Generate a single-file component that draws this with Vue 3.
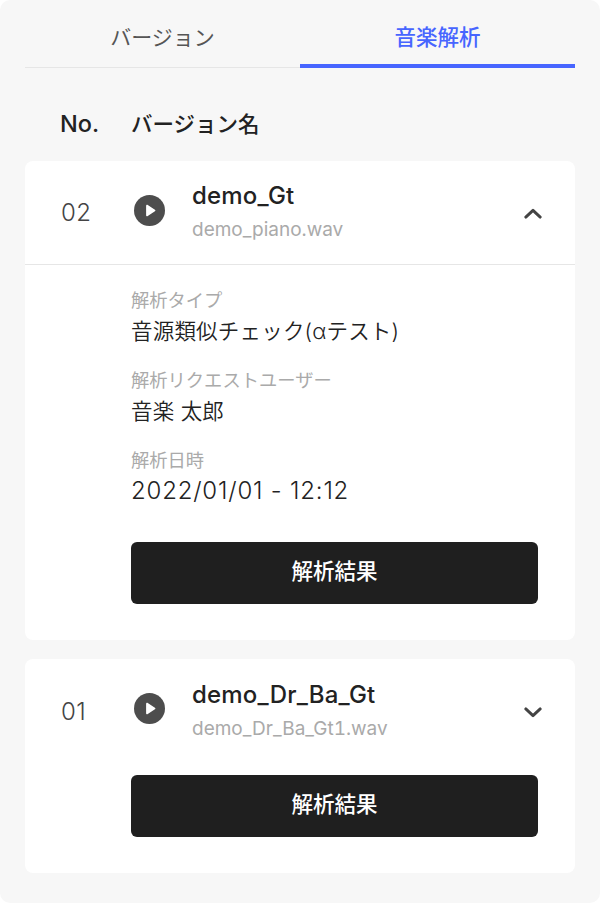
<template>
  <div class="screen">
    <div class="tabs">
      <div class="tab">バージョン</div>
      <div class="tab active">音楽解析</div>
    </div>

    <div class="heads">
      <span class="head-no">No.</span>
      <span>バージョン名</span>
    </div>

    <section v-for="item in versions" :key="item.no" class="card">
      <div class="row" :class="{ open: item.open }">
        <span class="no">{{ item.no }}</span>
        <svg class="play" viewBox="0 0 32 32">
          <circle cx="16" cy="16" r="16" fill="#4d4d4d" />
          <path d="M12.5 11.2v9.6c0 .9.9 1.4 1.7.9l7.4-4.8c.7-.4.7-1.4 0-1.8l-7.4-4.8c-.8-.5-1.7 0-1.7.9z" fill="#fff" />
        </svg>
        <div class="names">
          <div class="name">{{ item.name }}</div>
          <div class="file">{{ item.file }}</div>
        </div>
        <svg class="chevron" viewBox="0 0 20 12">
          <path :d="item.open ? 'M2 10l8-7.5 8 7.5' : 'M2 2l8 7.5L18 2'" fill="none" stroke="#444" stroke-width="3.2" stroke-linecap="round" stroke-linejoin="round" />
        </svg>
      </div>

      <div class="body" :class="{ closed: !item.open }">
        <dl v-if="item.open" class="details">
          <template v-for="d in details" :key="d.label">
            <dt>{{ d.label }}</dt>
            <dd :class="{ date: d.date }">{{ d.value }}</dd>
          </template>
        </dl>
        <button class="result">解析結果</button>
      </div>
    </section>
  </div>
</template>

<script setup>
const versions = [
  { no: '02', name: 'demo_Gt', file: 'demo_piano.wav', open: true },
  { no: '01', name: 'demo_Dr_Ba_Gt', file: 'demo_Dr_Ba_Gt1.wav', open: false }
]

const details = [
  { label: '解析タイプ', value: '音源類似チェック(αテスト)' },
  { label: '解析リクエストユーザー', value: '音楽 太郎' },
  { label: '解析日時', value: '2022/01/01 - 12:12', date: true }
]
</script>

<style>
html,
body {
  margin: 0;
  background: #fff;
}
</style>

<style scoped>
.screen {
  box-sizing: border-box;
  width: 600px;
  height: 903px;
  padding: 0 25px;
  background: #f7f7f7;
  border-radius: 10px;
  font-family: Inter, 'Noto Sans CJK JP', sans-serif;
  color: #222;
  overflow: hidden;
}

.tabs {
  display: flex;
  height: 68px;
  border-bottom: 1px solid #e6e6e6;
  box-sizing: border-box;
}

.tab {
  flex: 1;
  box-sizing: border-box;
  height: 68px;
  padding-top: 22px;
  text-align: center;
  font-size: 21px;
  line-height: 32px;
  color: #555;
}

.tab.active {
  padding-top: 21px;
  color: #4765ff;
  font-size: 21.5px;
  font-weight: 500;
  border-bottom: 4px solid #4765ff;
}

.heads {
  display: flex;
  height: 93px;
  padding: 40px 0 0 35px;
  box-sizing: border-box;
  font-size: 21.5px;
  line-height: 32px;
  font-weight: 500;
}

.head-no {
  width: 71px;
  font-size: 23.5px;
}

.card {
  background: #fff;
  border-radius: 8px;
  margin-bottom: 19px;
}

.row {
  display: flex;
  align-items: center;
  box-sizing: border-box;
  height: 104px;
  padding: 0 33px 0 36px;
}

.row.open {
  border-bottom: 1px solid #e6e6e6;
}

.no {
  width: 73px;
  font-size: 24px;
  letter-spacing: 0.5px;
  font-weight: 300;
  color: #444;
}

.play {
  width: 31px;
  height: 31px;
  margin-top: -5px;
  flex: none;
}

.names {
  flex: 1;
  margin-left: 27px;
  margin-top: -2px;
}

.name {
  font-size: 24px;
  letter-spacing: 0.2px;
  line-height: 32px;
  font-weight: 500;
}

.file {
  font-size: 19px;
  font-variant-numeric: tabular-nums;
  line-height: 26px;
  margin-top: 5px;
  color: #aaa;
}

.chevron {
  width: 18px;
  height: 11px;
  margin-top: 2px;
  flex: none;
}

.body {
  padding: 0 37px 36.5px 106px;
}

.body.closed {
  padding-top: 12px;
}

.details {
  margin: 0;
  padding-top: 21px;
}

dt {
  font-size: 18.3px;
  line-height: 28px;
  color: #aaa;
}

dd {
  margin: 3px 0 21px;
  font-size: 21.5px;
  letter-spacing: 0.2px;
  font-weight: 350;
  line-height: 28px;
  color: #222;
}

dd.date {
  font-size: 24px;
  font-weight: 300;
  letter-spacing: 0.8px;
}

.result {
  display: block;
  width: 100%;
  height: 61.5px;
  padding: 0 0 7px;
  border: none;
  border-radius: 6px;
  background: #1f1f1f;
  color: #fff;
  font-family: inherit;
  font-size: 21.5px;
  font-weight: 500;
}

.details + .result {
  margin-top: 37px;
}
</style>
